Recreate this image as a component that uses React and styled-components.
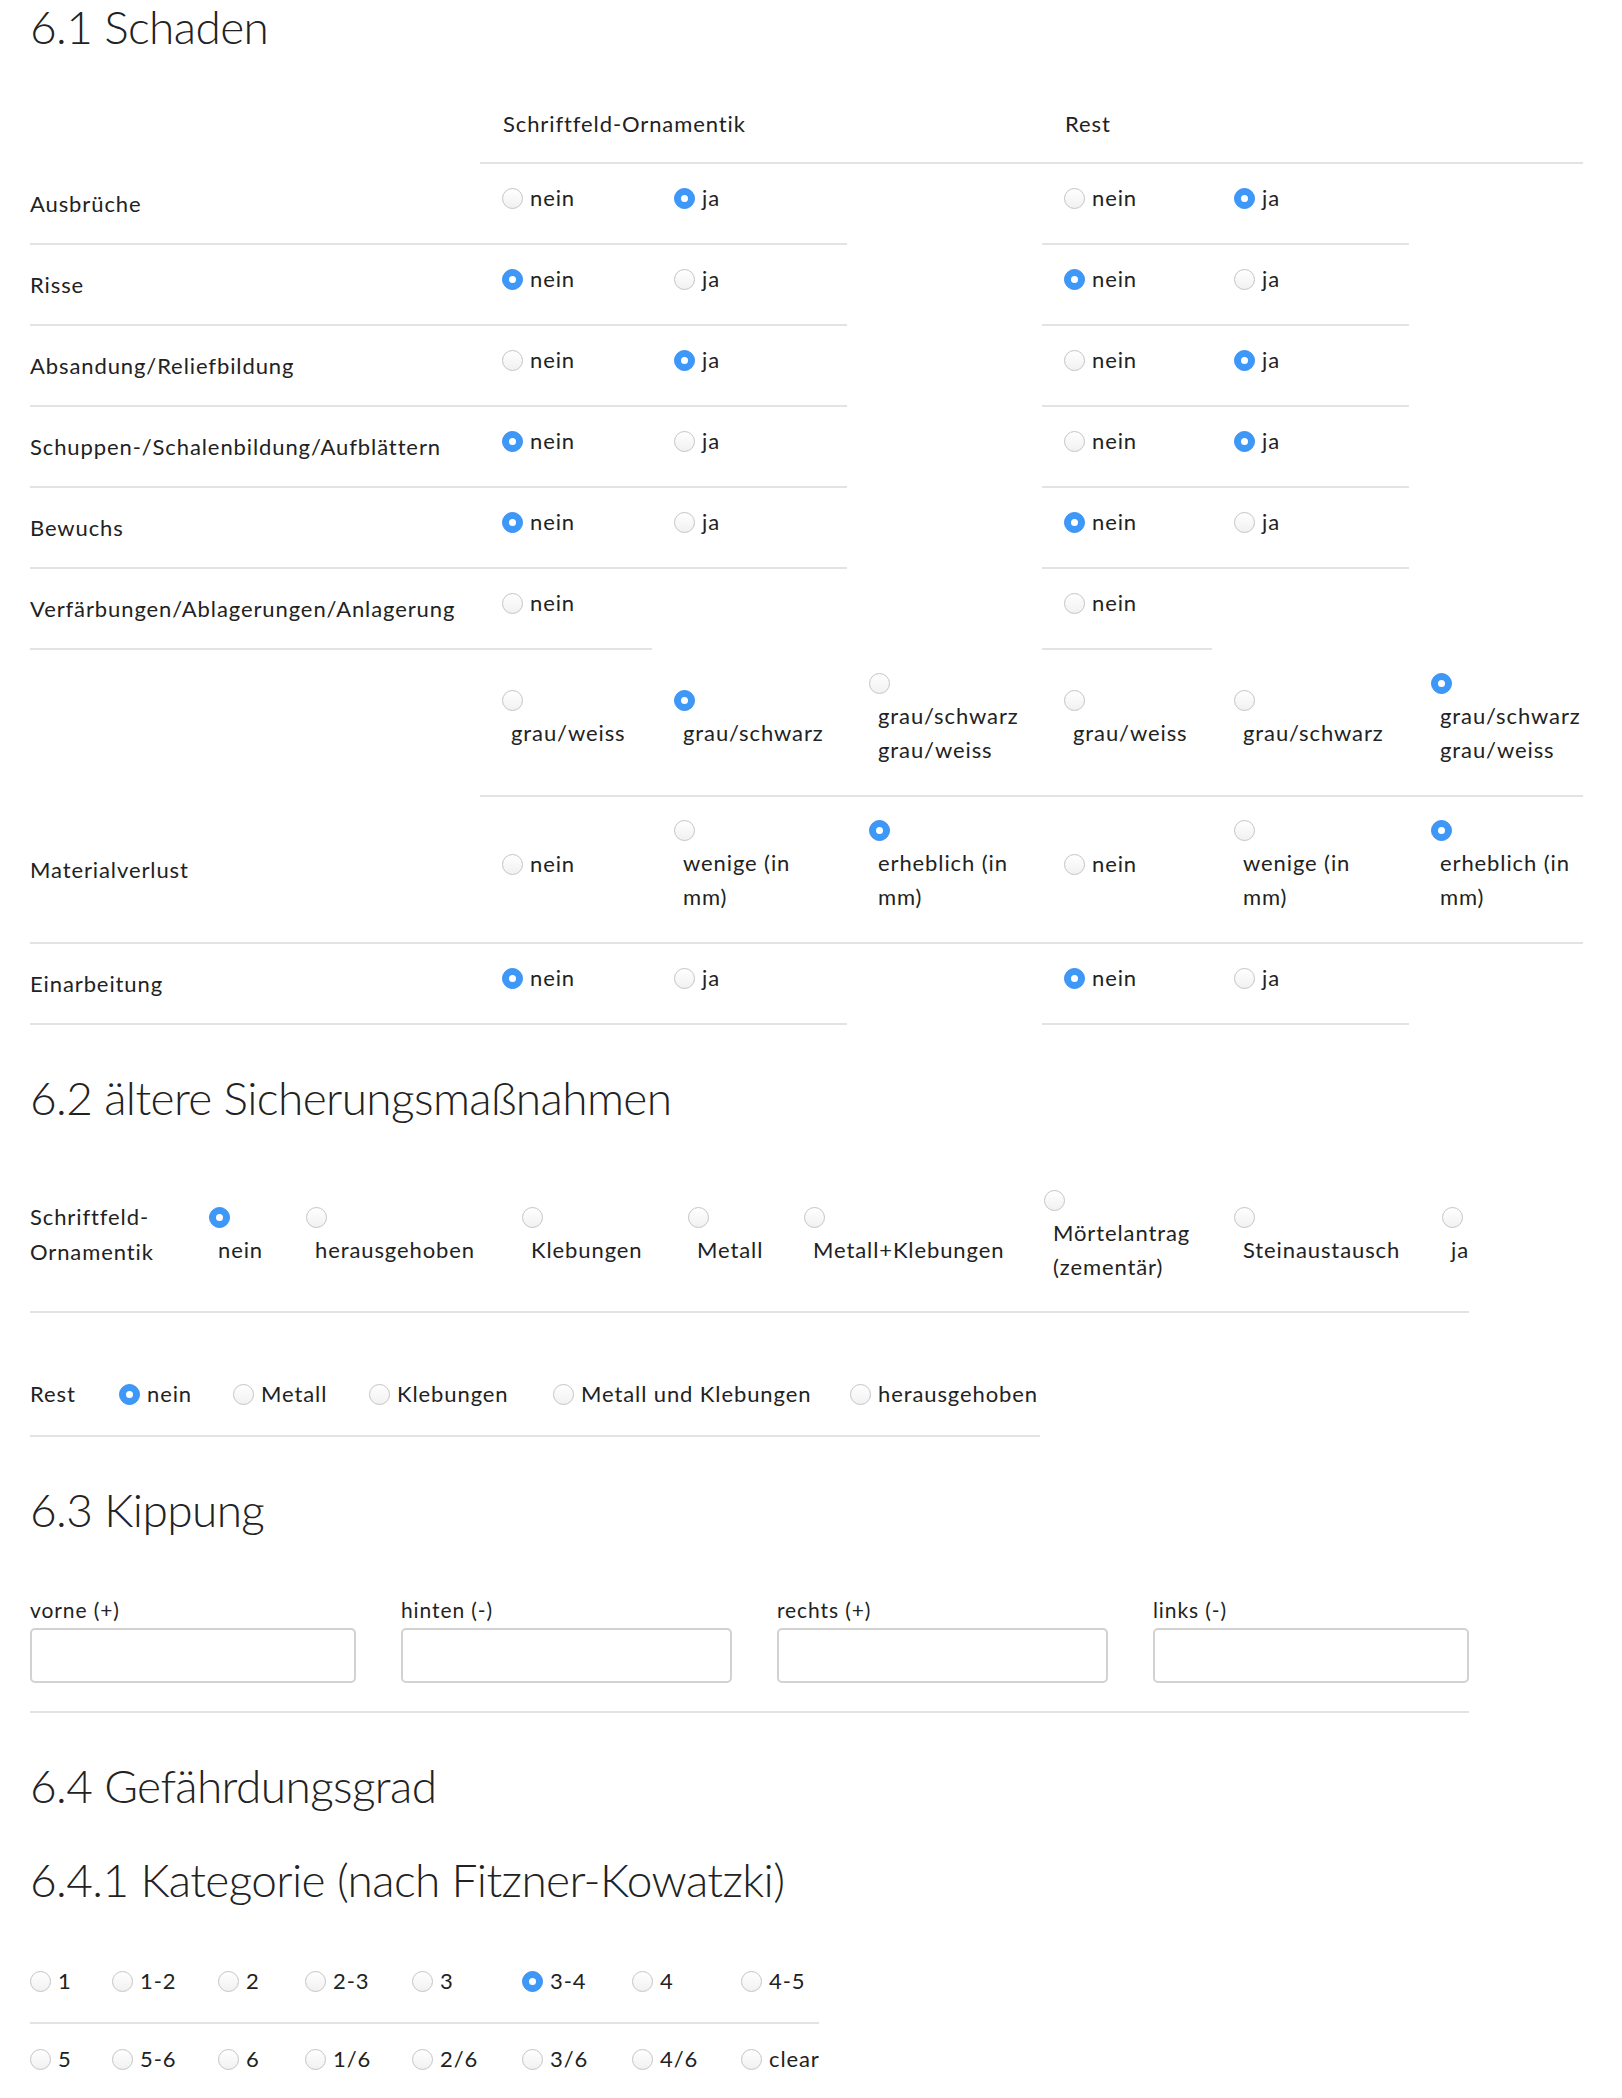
import React from "react";
import styled, { createGlobalStyle } from "styled-components";

const GlobalStyle = createGlobalStyle`
  html, body {
    margin: 0;
    padding: 0;
    background: #fff;
  }
  body {
    font-family: Lato, "Open Sans", sans-serif;
    color: #222;
  }
  * {
    box-sizing: border-box;
  }
`;

const Page = styled.div`
  width: 1622px;
  padding-left: 30px;
  font-size: 22px;
  letter-spacing: 0.9px;
  line-height: 34px;
  overflow: hidden;
`;

const Heading = styled.h2`
  margin: ${({ $top }) => $top}px 0 0;
  font-size: 46px;
  font-weight: 300;
  line-height: 54px;
  letter-spacing: -0.6px;
  white-space: nowrap;
`;

/* radio button, macOS look */
const Dot = styled.span`
  flex: none;
  width: 21px;
  height: 21px;
  border-radius: 50%;
  display: inline-flex;
  align-items: center;
  justify-content: center;
  border: 1px solid ${({ $on }) => ($on ? "#3a8ff0" : "#c4c4c4")};
  background: ${({ $on }) =>
    $on ? "#3d98f8" : "linear-gradient(#ffffff, #f1f1f1)"};
  &::after {
    content: "";
    display: ${({ $on }) => ($on ? "block" : "none")};
    width: 7px;
    height: 7px;
    border-radius: 50%;
    background: #fff;
  }
`;

const OptionWrap = styled.label`
  display: flex;
  flex-direction: ${({ $stacked }) => ($stacked ? "column" : "row")};
  align-items: ${({ $stacked }) => ($stacked ? "flex-start" : "center")};
  white-space: nowrap;
`;

const DotBox = styled.span`
  display: flex;
  align-items: center;
  height: ${({ $stacked }) => ($stacked ? 32 : 34)}px;
`;

const OptText = styled.span`
  display: block;
  margin-left: ${({ $stacked }) => ($stacked ? 9 : 7)}px;
`;

const Line = styled.span`
  display: block;
  line-height: ${({ $lh }) => $lh || 34}px;
`;

function Option({ text, on, stacked }) {
  const lines = Array.isArray(text) ? text : [text];
  return (
    <OptionWrap $stacked={stacked}>
      <DotBox $stacked={stacked}>
        <Dot $on={on} />
      </DotBox>
      <OptText $stacked={stacked}>
        {lines.map((l, i) => (
          <Line key={i}>{l}</Line>
        ))}
      </OptText>
    </OptionWrap>
  );
}

/* 6.1 table */
const DamageGrid = styled.div`
  display: grid;
  grid-template-columns: 450px 172px 195px 195px 170px 197px 174px;
`;

const cellPadding = {
  head: "53px 0 21px 23px",
  opt: "17px 8px 28px 22px",
  label: "0",
};

const Cell = styled.div`
  display: flex;
  align-items: center;
  grid-column: span ${({ $span }) => $span || 1};
  padding: ${({ $kind }) => cellPadding[$kind || "opt"]};
  border-bottom: 2px solid ${({ $line }) => ($line ? "#e3e3e3" : "transparent")};
  white-space: nowrap;
`;

/* rows of options with a line under them */
const OptionRow = styled.div`
  display: grid;
  grid-template-columns: ${({ $cols }) => $cols};
  align-items: center;
  width: max-content;
  padding: ${({ $pad }) => $pad};
  border-bottom: 2px solid #e3e3e3;
`;

const RowLabel = styled.div`
  white-space: nowrap;
`;

/* 6.3 inputs */
const TiltGrid = styled.div`
  display: grid;
  grid-template-columns: 326px 331px 331px 316px;
  column-gap: 45px;
  width: 1439px;
  margin-top: 56px;
  padding-bottom: 28px;
  border-bottom: 2px solid #e3e3e3;
`;

const Field = styled.div`
  display: flex;
  flex-direction: column;
`;

const FieldLabel = styled.label`
  font-size: 21px;
  line-height: 34px;
`;

const TextInput = styled.input`
  margin-top: 1px;
  height: 55px;
  width: 100%;
  border: 2px solid #d2d2d2;
  border-radius: 5px;
  background: #fff;
  font: inherit;
  padding: 0 12px;
  outline: none;
`;

const yesNo = ["nein", "ja"];
const colours = [
  { text: ["grau/weiss"], stacked: true },
  { text: ["grau/schwarz"], stacked: true },
  { text: ["grau/schwarz", "grau/weiss"], stacked: true },
];
const loss = [
  { text: ["nein"] },
  { text: ["wenige (in", "mm)"], stacked: true },
  { text: ["erheblich (in", "mm)"], stacked: true },
];

const damage = [
  { label: "Ausbrüche", opts: yesNo, s: 1, r: 1 },
  { label: "Risse", opts: yesNo, s: 0, r: 0 },
  { label: "Absandung/Reliefbildung", opts: yesNo, s: 1, r: 1 },
  { label: "Schuppen-/Schalenbildung/Aufblättern", opts: yesNo, s: 0, r: 1 },
  { label: "Bewuchs", opts: yesNo, s: 0, r: 0 },
  { label: "Verfärbungen/Ablagerungen/Anlagerung", opts: ["nein"], s: -1, r: -1 },
  { label: "", opts: colours, s: 1, r: 2 },
  { label: "Materialverlust", opts: loss, s: 2, r: 2 },
  { label: "Einarbeitung", opts: yesNo, s: 0, r: 0 },
];

const norm = (o) => (typeof o === "string" ? { text: [o] } : o);

function GroupCells({ opts, selected }) {
  return [0, 1, 2].map((i) => {
    const o = opts[i] ? norm(opts[i]) : null;
    return (
      <Cell key={i} $line={!!o}>
        {o && <Option text={o.text} stacked={o.stacked} on={selected === i} />}
      </Cell>
    );
  });
}

const olderS = [
  { text: ["nein"], on: true },
  { text: ["herausgehoben"] },
  { text: ["Klebungen"] },
  { text: ["Metall"] },
  { text: ["Metall+Klebungen"] },
  { text: ["Mörtelantrag", "(zementär)"] },
  { text: ["Steinaustausch"] },
  { text: ["ja"] },
];
const olderR = ["nein", "Metall", "Klebungen", "Metall und Klebungen", "herausgehoben"];

const catCols = "82px 106px 87px 107px 110px 110px 109px 78px";
const cat1 = ["1", "1-2", "2", "2-3", "3", "3-4", "4", "4-5"];
const cat2 = ["5", "5-6", "6", "1/6", "2/6", "3/6", "4/6", "clear"];

export default function App() {
  return (
    <Page>
      <GlobalStyle />
      <Heading $top={0}>6.1 Schaden</Heading>
      <DamageGrid>
        <Cell $kind="label" />
        <Cell $kind="head" $span={3} $line>
          Schriftfeld-Ornamentik
        </Cell>
        <Cell $kind="head" $span={3} $line>
          Rest
        </Cell>
        {damage.map((row, i) => (
          <React.Fragment key={i}>
            <Cell $kind="label" $line={!!row.label}>
              {row.label}
            </Cell>
            <GroupCells opts={row.opts} selected={row.s} />
            <GroupCells opts={row.opts} selected={row.r} />
          </React.Fragment>
        ))}
      </DamageGrid>

      <Heading $top={46}>6.2 ältere Sicherungsmaßnahmen</Heading>
      <OptionRow
        $cols="179px 97px 216px 166px 116px 240px 190px 208px 27px"
        $pad="59px 0 27px 0"
      >
        <RowLabel>
          <Line $lh={35}>Schriftfeld-</Line>
          <Line $lh={35}>Ornamentik</Line>
        </RowLabel>
        {olderS.map((o, i) => (
          <Option key={i} text={o.text} on={o.on} stacked />
        ))}
      </OptionRow>
      <OptionRow $cols="89px 114px 136px 184px 297px 190px" $pad="64px 0 24px 0">
        <RowLabel>Rest</RowLabel>
        {olderR.map((t, i) => (
          <Option key={t} text={t} on={i === 0} />
        ))}
      </OptionRow>

      <Heading $top={46}>6.3 Kippung</Heading>
      <TiltGrid>
        {["vorne (+)", "hinten (-)", "rechts (+)", "links (-)"].map((l) => (
          <Field key={l}>
            <FieldLabel>{l}</FieldLabel>
            <TextInput type="text" />
          </Field>
        ))}
      </TiltGrid>

      <Heading $top={46}>6.4 Gefährdungsgrad</Heading>
      <Heading $top={40}>6.4.1 Kategorie (nach Fitzner-Kowatzki)</Heading>
      <OptionRow $cols={catCols} $pad="57px 0 24px 0">
        {cat1.map((t) => (
          <Option key={t} text={t} on={t === "3-4"} />
        ))}
      </OptionRow>
      <OptionRow $cols={catCols} $pad="18px 0 24px 0">
        {cat2.map((t) => (
          <Option key={t} text={t} />
        ))}
      </OptionRow>
    </Page>
  );
}
